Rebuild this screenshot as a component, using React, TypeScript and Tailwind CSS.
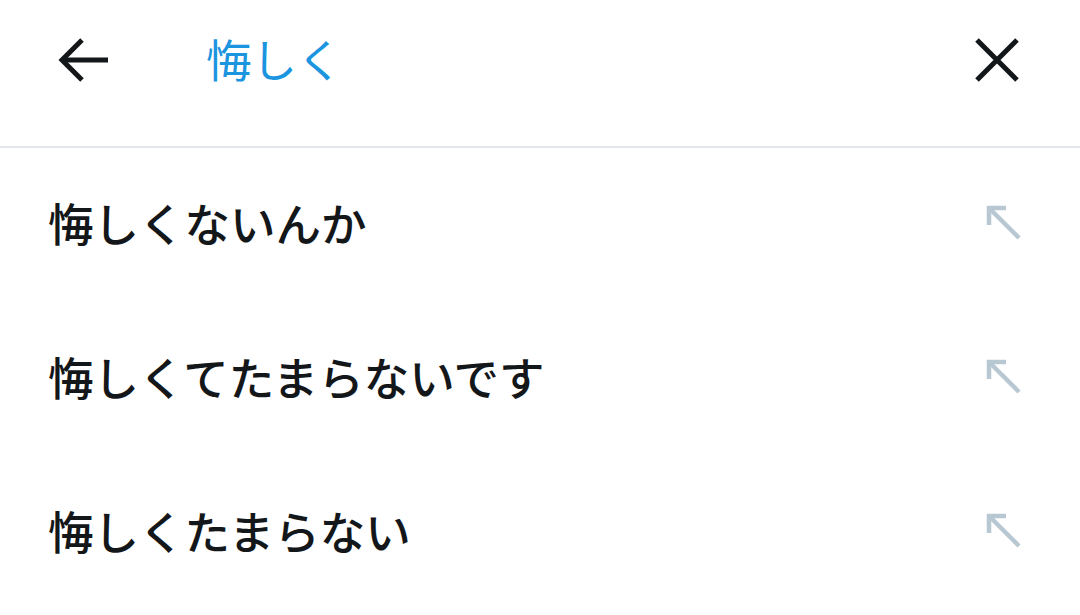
import React from "react";

const font = { fontFamily: '"Noto Sans CJK JP", "Noto Sans", sans-serif' };

function UpLeft() {
  return (
    <svg width="36" height="36" viewBox="0 0 36 36" fill="none">
      <path d="M3 20 V3 H20" stroke="#b8c8d2" strokeWidth="4.5" strokeLinecap="butt" strokeLinejoin="miter" />
      <path d="M4 4 L33 33" stroke="#b8c8d2" strokeWidth="4.5" />
    </svg>
  );
}

export default function App() {
  const items = ["悔しくないんか", "悔しくてたまらないです", "悔しくたまらない"];
  return (
    <div className="w-[1080px] h-[615px] bg-white overflow-hidden" style={font}>
      <div className="h-[148px] flex items-center pb-[26px] border-b-2 border-[#e3e6ea]">
        <div className="w-[206px] pl-[58px] flex items-center">
          <svg width="52" height="48" viewBox="0 0 52 48" fill="none">
            <path d="M50 24 H6" stroke="#14171a" strokeWidth="5" />
            <path d="M24 4 L4 24 L24 44" stroke="#14171a" strokeWidth="5" strokeLinejoin="miter" />
          </svg>
        </div>
        <div className="flex-1 text-[45.5px] text-[#1b95e0] leading-none pb-[2px]">悔しく</div>
        <div className="pr-[60px] flex items-center">
          <svg width="46" height="46" viewBox="0 0 46 46" fill="none">
            <path d="M3 3 L43 43 M43 3 L3 43" stroke="#14171a" strokeWidth="5" />
          </svg>
        </div>
      </div>
      <div className="flex flex-col">
        {items.map((t) => (
          <div key={t} className="h-[154px] flex items-center pl-[48px] pr-[58px] pb-[4px]">
            <div className="flex-1 text-[45.5px] font-medium text-[#14171a] leading-none">{t}</div>
            <UpLeft />
          </div>
        ))}
      </div>
    </div>
  );
}
